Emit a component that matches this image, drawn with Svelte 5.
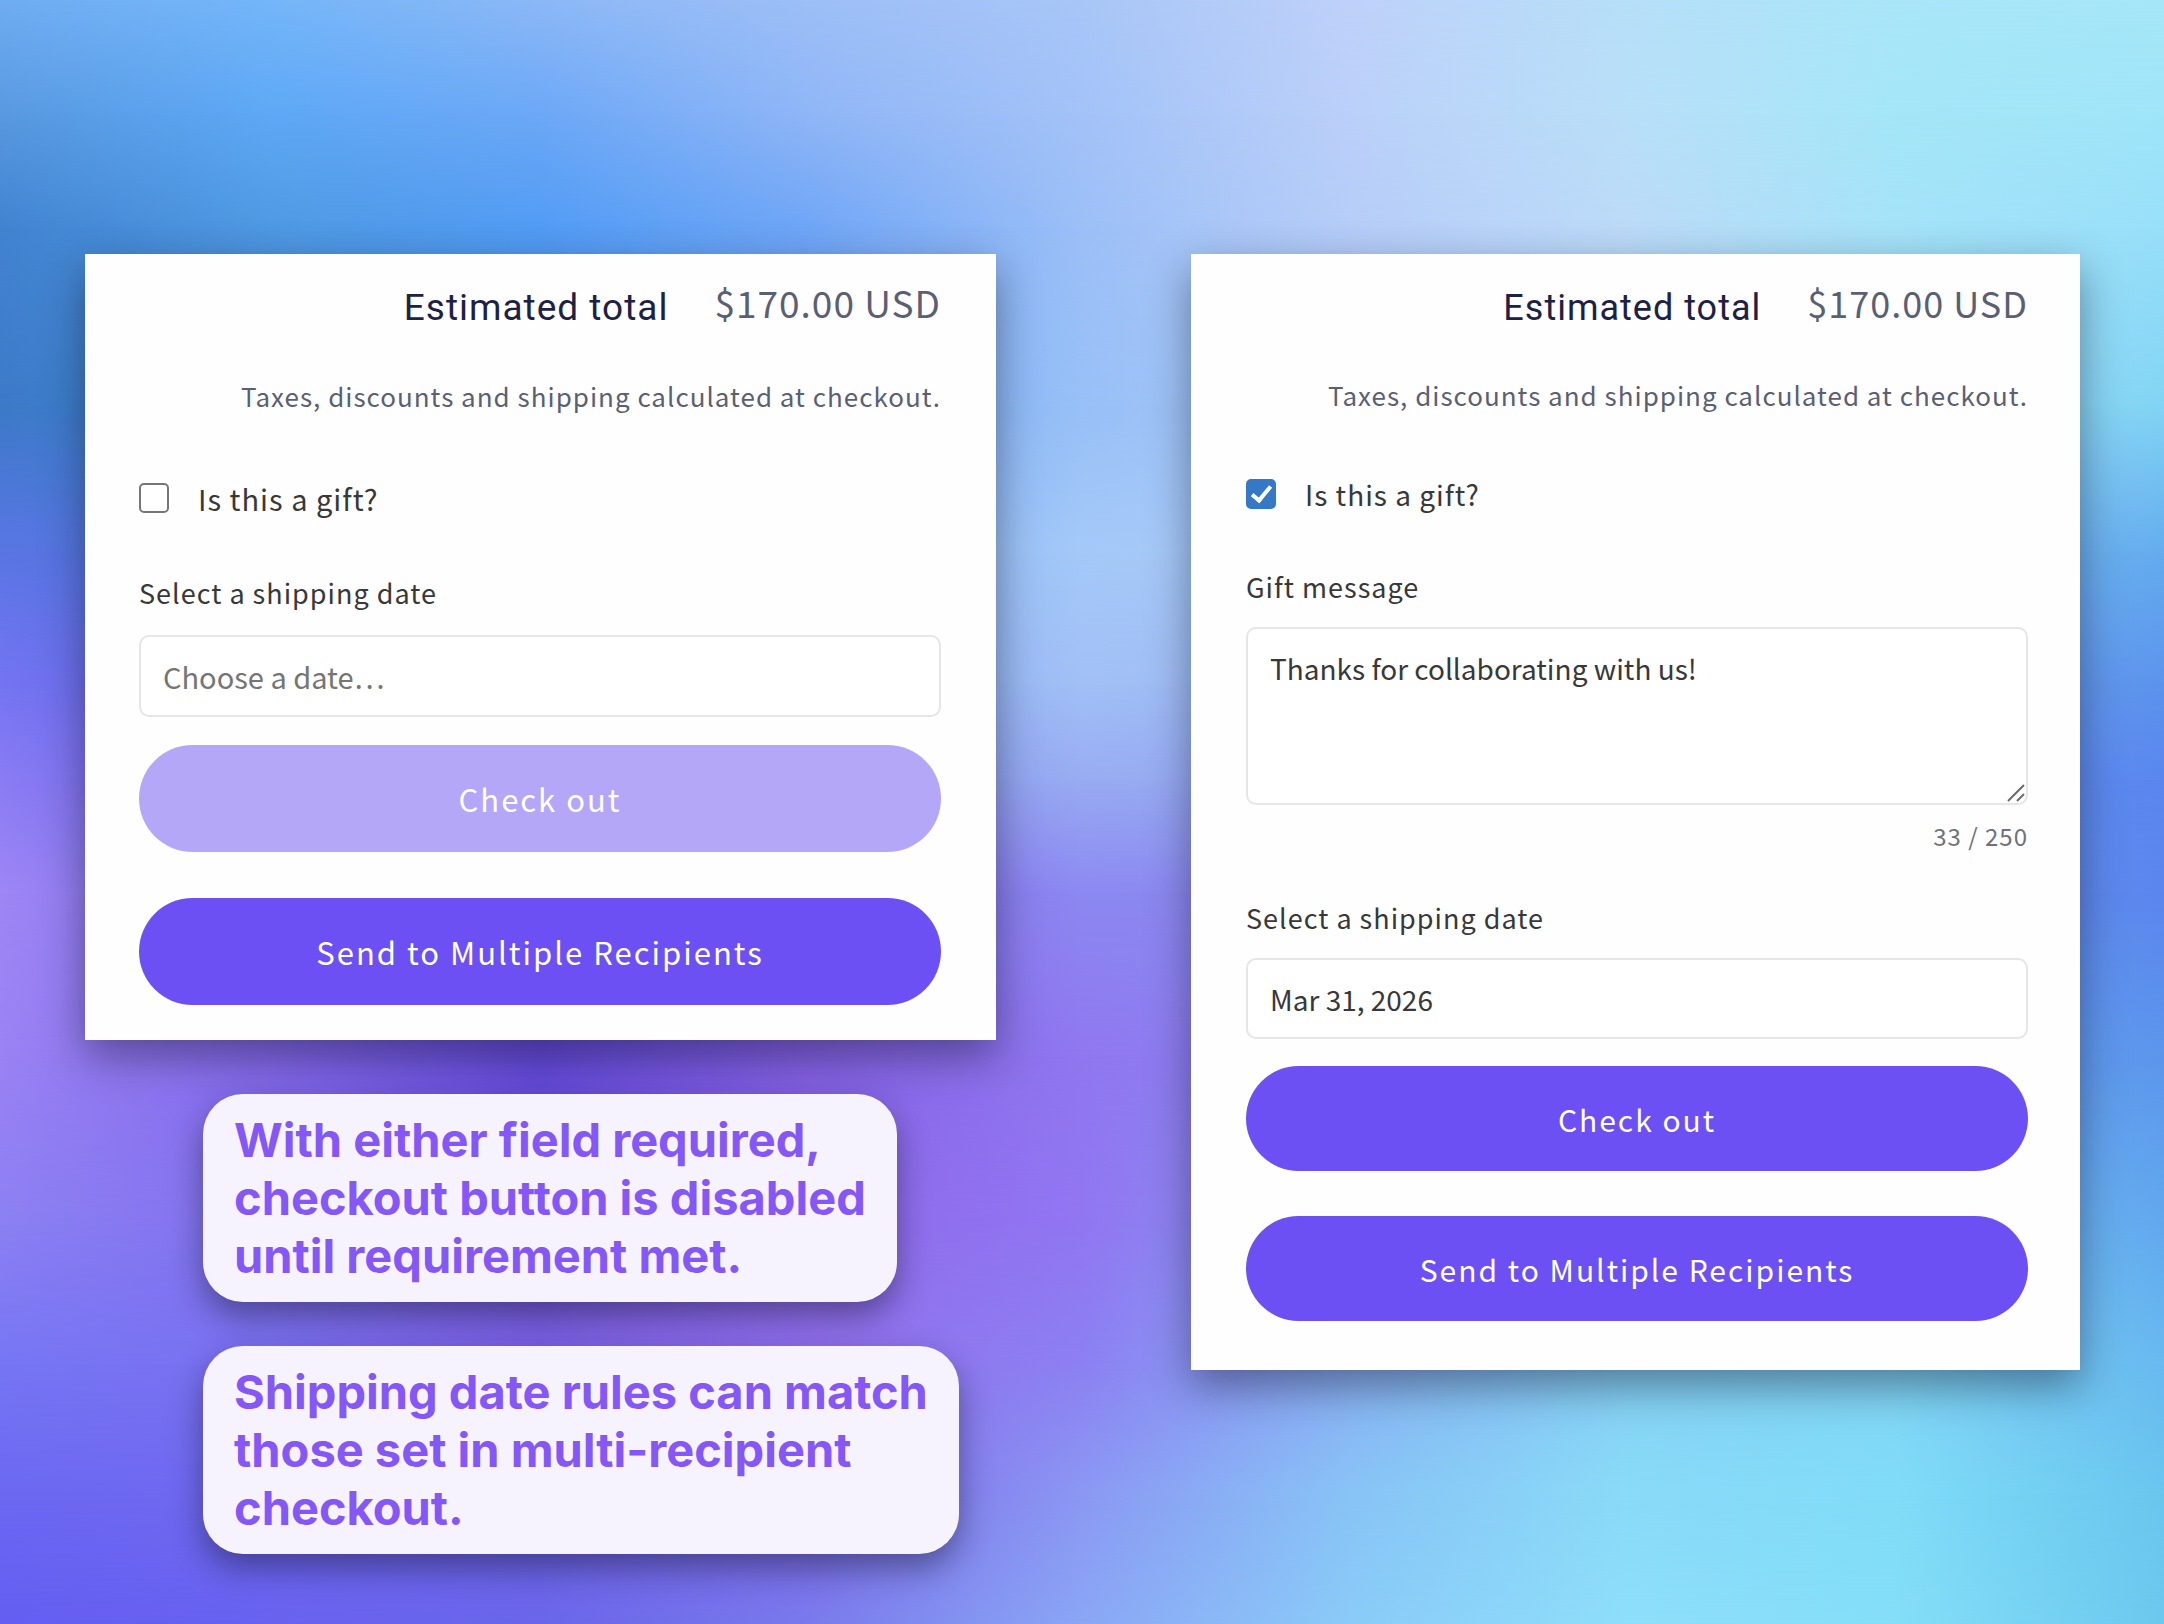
<script>
  const columns = ['0%', '12.5%', '25%', '37.5%', '50%', '62.5%', '75%', '87.5%', '100%'];
  const rows = [
    { at: 0, colors: ['#70adf2', '#74b6f9', '#8cb8f6', '#9dbff7', '#a8c6f7', '#bfd1fa', '#b7dff8', '#a9e6f8', '#a5e7f8'] },
    { at: 7, colors: ['#5899e0', '#5ea8f6', '#6ca8f6', '#90b6f6', '#a3c2f8', '#bbd0f9', '#b9dff8', '#a5e6f8', '#9fe5f9'] },
    { at: 14, colors: ['#4283d0', '#4f99e2', '#529cf5', '#70a6f6', '#9cbff7', '#b6cdf8', '#bcdaf8', '#a5e3f8', '#98dff9'] },
    { at: 25, colors: ['#3c7ac8', '#3e84d0', '#4a90e4', '#74a8f2', '#98c0f7', '#a8c8f8', '#b0d8f8', '#98daf6', '#82d4f4'] },
    { at: 34, colors: ['#5a76e4', '#4672d4', '#5080e0', '#84b0f2', '#a4c9f8', '#a8c8f6', '#9cc8f4', '#7cbcf0', '#64acee'] },
    { at: 42, colors: ['#7474f2', '#5c62e2', '#5c74e2', '#84a8f0', '#a2c0f6', '#9cb8f4', '#8cb0f0', '#6ca0ee', '#5c94ec'] },
    { at: 48, colors: ['#8a7cf4', '#6a60e4', '#6668e4', '#8694ec', '#98acf2', '#94a8f2', '#7c9cee', '#6494ee', '#5a86ee'] },
    { at: 55, colors: ['#9e86f5', '#7c6ae8', '#6450de', '#8468e8', '#8c88f1', '#8a88f0', '#7096ec', '#6490ec', '#5b86ee'] },
    { at: 65, colors: ['#9a82f4', '#8468ea', '#6349da', '#8461e4', '#9077f0', '#8a84f0', '#74a4ee', '#68a0ec', '#5c96ec'] },
    { at: 75, colors: ['#8c80f3', '#8270ee', '#7656e0', '#8f69ea', '#9176f2', '#8898f0', '#7cbcf0', '#74c0ee', '#62a8ee'] },
    { at: 84, colors: ['#7676f4', '#7a70f0', '#7c62e4', '#9170ee', '#8c80f2', '#88b0f2', '#84d0f4', '#80d4f4', '#68baf0'] },
    { at: 92, colors: ['#6c68f2', '#7068f0', '#7062e8', '#7c68e8', '#8b98f3', '#88c4f6', '#8adaf8', '#80dcf8', '#6ac6ee'] },
    { at: 100, colors: ['#645ef2', '#6862f0', '#6a66ea', '#7a7aec', '#8aa6f5', '#8acbf8', '#8edefa', '#84def8', '#6cc8ee'] }
  ];

  const layers = rows.map((row, i) => {
    const fill = row.colors.map((c, k) => `${c} ${columns[k]}`).join(', ');
    const fade = i === 0 ? 'none' : `linear-gradient(to bottom, transparent ${rows[i - 1].at}%, #000 ${row.at}%)`;
    return `background: linear-gradient(to right, ${fill}); mask-image: ${fade};`;
  });

  const limit = 250;
  let giftLeft = $state(false);
  let giftRight = $state(true);
  let dateLeft = $state('');
  let dateRight = $state('Mar 31, 2026');
  let message = $state('Thanks for collaborating with us!');
</script>

<div class="page">
  <div class="backdrop" aria-hidden="true">
    {#each layers as layer}
      <div class="layer" style={layer}></div>
    {/each}
  </div>

  <main class="board">
    <div class="column">
      <section class="card large" aria-label="Cart summary, requirements not met">
        <div class="total">
          <h2>Estimated total</h2>
          <p class="price">$170.00 USD</p>
        </div>
        <p class="taxes">Taxes, discounts and shipping calculated at checkout.</p>
        <label class="gift">
          <input type="checkbox" bind:checked={giftLeft} />
          <span>Is this a gift?</span>
        </label>
        <label class="caption" for="date-left">Select a shipping date</label>
        <input class="field" id="date-left" type="text" placeholder="Choose a date…" bind:value={dateLeft} />
        <button class="pill" type="button" disabled={dateLeft === ''}>Check out</button>
        <button class="pill second" type="button">Send to Multiple Recipients</button>
      </section>
      <div class="notes">
        <p class="note">With either field required,<br />checkout button is disabled<br />until requirement met.</p>
        <p class="note">Shipping date rules can match<br />those set in multi-recipient<br />checkout.</p>
      </div>
    </div>

    <section class="card small" aria-label="Cart summary, requirements met">
      <div class="total">
        <h2>Estimated total</h2>
        <p class="price">$170.00 USD</p>
      </div>
      <p class="taxes">Taxes, discounts and shipping calculated at checkout.</p>
      <label class="gift">
        <input type="checkbox" bind:checked={giftRight} />
        <span>Is this a gift?</span>
      </label>
      <label class="caption" for="message">Gift message</label>
      <div class="message">
        <textarea class="field" id="message" maxlength={limit} bind:value={message}></textarea>
        <svg class="grip" viewBox="0 0 20 20" aria-hidden="true">
          <path d="M2 18 18 2M11 18l7-7" />
        </svg>
      </div>
      <p class="counter">{message.length} / {limit}</p>
      <label class="caption after" for="date-right">Select a shipping date</label>
      <input class="field" id="date-right" type="text" bind:value={dateRight} />
      <button class="pill" type="button">Check out</button>
      <button class="pill second" type="button">Send to Multiple Recipients</button>
    </section>
  </main>
</div>

<style>
  :global(body) {
    margin: 0;
  }

  .page {
    position: relative;
    min-height: 100vh;
    box-sizing: border-box;
    overflow: hidden;
    padding: 254px 84px 70px 85px;
    font-family: "Noto Sans CJK SC", "Noto Sans", sans-serif;
    color: #383838;
  }

  .backdrop,
  .layer {
    position: absolute;
    inset: 0;
  }

  .board {
    position: relative;
    display: grid;
    grid-template-columns: 911fr 889fr;
    column-gap: 195px;
    align-items: start;
  }

  h2,
  p {
    margin: 0;
    font-weight: 400;
  }

  .card {
    display: flex;
    flex-direction: column;
    box-sizing: border-box;
    background: #fefefe;
    box-shadow: 0 16px 40px rgba(20, 20, 40, 0.45);
    letter-spacing: 1px;
  }

  .large {
    --title: 37px;
    --price: 37px;
    --body: 29px;
    --action: 31px;
    --field-height: 82px;
    --pill-height: 107px;
    --taxes-gap: 38px;
    --gift-gap: 62px;
    --caption-gap: 55px;
    --field-gap: 22px;
    --pill-gap: 28px;
    --second-gap: 46px;
    padding: 24px 55px 35px 54px;
  }

  .small {
    --title: 36px;
    --price: 36px;
    --body: 28px;
    --action: 30px;
    --field-height: 81px;
    --pill-height: 105px;
    --taxes-gap: 37px;
    --gift-gap: 59px;
    --caption-gap: 53px;
    --field-gap: 20px;
    --pill-gap: 27px;
    --second-gap: 45px;
    padding: 24px 52px 49px 55px;
  }

  .total {
    display: flex;
    justify-content: flex-end;
    align-items: flex-start;
    gap: 46px;
  }

  h2 {
    font-family: Roboto, sans-serif;
    font-size: var(--title);
    line-height: 60px;
    color: #1d2143;
  }

  .price {
    font-size: var(--price);
    line-height: 48px;
    color: #5b5f74;
  }

  .taxes {
    margin-top: var(--taxes-gap);
    font-size: 26px;
    line-height: 40px;
    text-align: right;
    color: #5b5f74;
  }

  .gift {
    display: flex;
    align-items: center;
    gap: 29px;
    margin-top: var(--gift-gap);
    font-size: var(--body);
    line-height: 40px;
  }

  .gift input {
    appearance: none;
    flex: none;
    width: 30px;
    height: 30px;
    margin: 0;
    border: 2px solid #767676;
    border-radius: 5px;
    background: #fff;
  }

  .gift input:checked {
    border-color: #3578c6;
    background: #3578c6;
    display: grid;
    place-items: center;
  }

  .gift input:checked::before {
    content: "";
    width: 7px;
    height: 16px;
    margin-bottom: 4px;
    border: solid #fff;
    border-width: 0 4px 4px 0;
    rotate: 40deg;
  }

  .caption {
    margin-top: var(--caption-gap);
    font-size: 27px;
    line-height: 40px;
  }

  .after {
    margin-top: 42px;
  }

  .field {
    display: block;
    box-sizing: border-box;
    width: 100%;
    height: var(--field-height);
    margin: var(--field-gap) 0 0;
    padding: 0 22px;
    border: 2px solid #e6e6e8;
    border-radius: 10px;
    background: #fff;
    color: #383838;
    font: inherit;
    letter-spacing: normal;
    font-size: var(--body);
    line-height: 40px;
    outline: none;
  }

  .field::placeholder {
    color: #757575;
    opacity: 1;
  }

  .message {
    position: relative;
  }

  textarea.field {
    height: 178px;
    padding-top: 19px;
    resize: vertical;
  }

  textarea.field::-webkit-resizer {
    display: none;
  }

  .grip {
    position: absolute;
    right: 2px;
    bottom: 2px;
    width: 20px;
    height: 20px;
    fill: none;
    stroke: #6b6b6b;
    stroke-width: 2;
    pointer-events: none;
  }

  .counter {
    margin-top: 11px;
    font-size: 24px;
    line-height: 40px;
    text-align: right;
    color: #71717c;
  }

  .pill {
    height: var(--pill-height);
    margin-top: var(--pill-gap);
    padding: 0 40px;
    border: 0;
    border-radius: 54px;
    background: #6d50f4;
    color: #fff;
    font: inherit;
    font-size: var(--action);
    letter-spacing: 2px;
  }

  .pill:disabled {
    background: #b5a7f8;
  }

  .second {
    margin-top: var(--second-gap);
  }

  .notes {
    display: flex;
    flex-direction: column;
    align-items: flex-start;
    gap: 44px;
    margin: 54px 0 0 118px;
  }

  .note {
    padding: 17px 31px;
    border-radius: 40px;
    background: #f6f3fe;
    box-shadow: 0 14px 32px rgba(20, 20, 40, 0.45);
    font-family: Inter, sans-serif;
    font-size: 47px;
    font-weight: 700;
    line-height: 58px;
    color: #8557f7;
  }
</style>
